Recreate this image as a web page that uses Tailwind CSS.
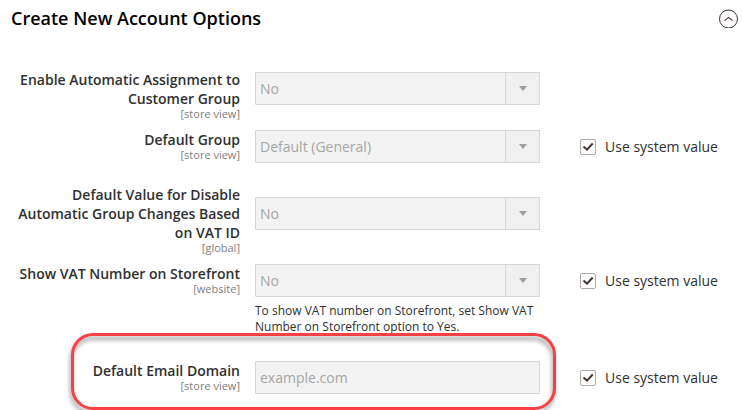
<!DOCTYPE html>
<html lang="en">
<head>
<meta charset="utf-8">
<meta name="viewport" content="width=device-width, initial-scale=1">
<title>Create New Account Options</title>
<script src="https://cdn.jsdelivr.net/npm/@tailwindcss/browser@4"></script>
</head>
<body class="min-h-screen overflow-hidden bg-white font-['Open_Sans','Noto_Sans',sans-serif] text-sm text-[#303030]">
<section>
  <header class="flex items-center justify-between pt-1 pr-1 pl-[11px]">
    <h2 class="text-[18px] leading-7 font-semibold text-black">Create New Account Options</h2>
    <button type="button" aria-label="Collapse section" aria-expanded="true" class="size-5">
      <svg viewBox="0 0 20 20" class="size-5" fill="none" stroke="#41362f"><circle cx="10.5" cy="11" r="9"/><path d="M6.5 12.6 10.5 9.4l4 3.2" stroke-width="1.2"/></svg>
    </button>
  </header>

  <form class="pt-[38px]">
    <div class="grid grid-cols-[240px_minmax(0,285px)_1fr] items-start gap-x-[15px]">
      <label for="auto-assign" class="pl-3 text-right leading-[19px] font-semibold">Enable Automatic Assignment to Customer Group<span class="block text-[11px] leading-3 font-normal text-[#808080]">[store view]</span></label>
      <div class="relative mt-0.5">
        <select id="auto-assign" disabled class="block h-[33px] w-full appearance-none rounded-[1px] border border-[#d6d6d6] bg-[#f3f3f3] pr-9 pl-1 text-[#a6a6a6] opacity-100"><option>No</option></select>
        <span class="pointer-events-none absolute inset-y-0 right-0 flex w-[35px] items-center justify-center border border-[#d6d6d6] bg-[#f0f0f0]"><svg viewBox="0 0 8 5" class="h-[5px] w-2" fill="#a09c97"><path d="M0 0h8L4 5z"/></svg></span>
      </div>
    </div>

    <div class="mt-[10px] grid grid-cols-[240px_minmax(0,285px)_1fr] items-start gap-x-[15px]">
      <label for="default-group" class="pl-3 text-right leading-[19px] font-semibold">Default Group<span class="block text-[11px] leading-3 font-normal text-[#808080]">[store view]</span></label>
      <div class="relative">
        <select id="default-group" disabled class="block h-[33px] w-full appearance-none rounded-[1px] border border-[#d6d6d6] bg-[#f3f3f3] pr-9 pl-1 text-[#a6a6a6] opacity-100"><option>Default (General)</option></select>
        <span class="pointer-events-none absolute inset-y-0 right-0 flex w-[35px] items-center justify-center border border-[#d6d6d6] bg-[#f0f0f0]"><svg viewBox="0 0 8 5" class="h-[5px] w-2" fill="#a09c97"><path d="M0 0h8L4 5z"/></svg></span>
      </div>
      <label class="flex h-[33px] items-center gap-[9px] pl-[25px]"><span class="relative size-4"><input type="checkbox" checked class="block size-4 appearance-none rounded-xs border border-[#adadad] bg-white"><svg viewBox="0 0 16 16" class="pointer-events-none absolute inset-0" fill="none" stroke="#41362f" stroke-width="2"><path d="M3.5 7.5 7 10.7l5.7-6.2"/></svg></span>Use system value</label>
    </div>

    <div class="mt-[22px] grid grid-cols-[240px_minmax(0,285px)_1fr] items-start gap-x-[15px]">
      <label for="vat-disable" class="pl-3 text-right leading-[19px] font-semibold">Default Value for Disable Automatic Group Changes Based on VAT ID<span class="block text-[11px] leading-3 font-normal text-[#808080]">[global]</span></label>
      <div class="relative mt-3">
        <select id="vat-disable" disabled class="block h-[33px] w-full appearance-none rounded-[1px] border border-[#d6d6d6] bg-[#f3f3f3] pr-9 pl-1 text-[#a6a6a6] opacity-100"><option>No</option></select>
        <span class="pointer-events-none absolute inset-y-0 right-0 flex w-[35px] items-center justify-center border border-[#d6d6d6] bg-[#f0f0f0]"><svg viewBox="0 0 8 5" class="h-[5px] w-2" fill="#a09c97"><path d="M0 0h8L4 5z"/></svg></span>
      </div>
    </div>

    <div class="mt-[10px] grid grid-cols-[240px_minmax(0,285px)_1fr] items-start gap-x-[15px]">
      <label for="show-vat" class="pl-3 text-right leading-[19px] font-semibold">Show VAT Number on Storefront<span class="block text-[11px] leading-3 font-normal text-[#808080]">[website]</span></label>
      <div>
        <div class="relative">
          <select id="show-vat" disabled aria-describedby="show-vat-note" class="block h-[33px] w-full appearance-none rounded-[1px] border border-[#d6d6d6] bg-[#f3f3f3] pr-9 pl-1 text-[#a6a6a6] opacity-100"><option>No</option></select>
          <span class="pointer-events-none absolute inset-y-0 right-0 flex w-[35px] items-center justify-center border border-[#d6d6d6] bg-[#f0f0f0]"><svg viewBox="0 0 8 5" class="h-[5px] w-2" fill="#a09c97"><path d="M0 0h8L4 5z"/></svg></span>
        </div>
        <p id="show-vat-note" class="mt-1.5 text-xs leading-4">To show VAT number on Storefront, set Show VAT Number on Storefront option to Yes.</p>
      </div>
      <label class="flex h-[33px] items-center gap-[9px] pl-[25px]"><span class="relative size-4"><input type="checkbox" checked class="block size-4 appearance-none rounded-xs border border-[#adadad] bg-white"><svg viewBox="0 0 16 16" class="pointer-events-none absolute inset-0" fill="none" stroke="#41362f" stroke-width="2"><path d="M3.5 7.5 7 10.7l5.7-6.2"/></svg></span>Use system value</label>
    </div>

    <div class="relative mt-[26px] grid grid-cols-[240px_minmax(0,285px)_1fr] items-start gap-x-[15px]">
      <label for="email-domain" class="pl-3 text-right leading-[19px] font-semibold">Default Email Domain<span class="block text-[11px] leading-3 font-normal text-[#808080]">[store view]</span></label>
      <input id="email-domain" type="text" value="example.com" disabled class="block h-[33px] w-full rounded-[1px] border border-[#d6d6d6] bg-[#f3f3f3] px-1 text-[#a6a6a6]">
      <label class="flex h-[33px] items-center gap-[9px] pl-[25px]"><span class="relative size-4"><input type="checkbox" checked class="block size-4 appearance-none rounded-xs border border-[#adadad] bg-white"><svg viewBox="0 0 16 16" class="pointer-events-none absolute inset-0" fill="none" stroke="#41362f" stroke-width="2"><path d="M3.5 7.5 7 10.7l5.7-6.2"/></svg></span>Use system value</label>
      <div class="pointer-events-none absolute -top-7 -bottom-4 left-[71px] w-[485px] rounded-[22px] border-3 border-[#f94144] drop-shadow-[-1px_4px_2px_rgba(0,0,0,0.4)]"></div>
    </div>
  </form>
</section>
</body>
</html>
